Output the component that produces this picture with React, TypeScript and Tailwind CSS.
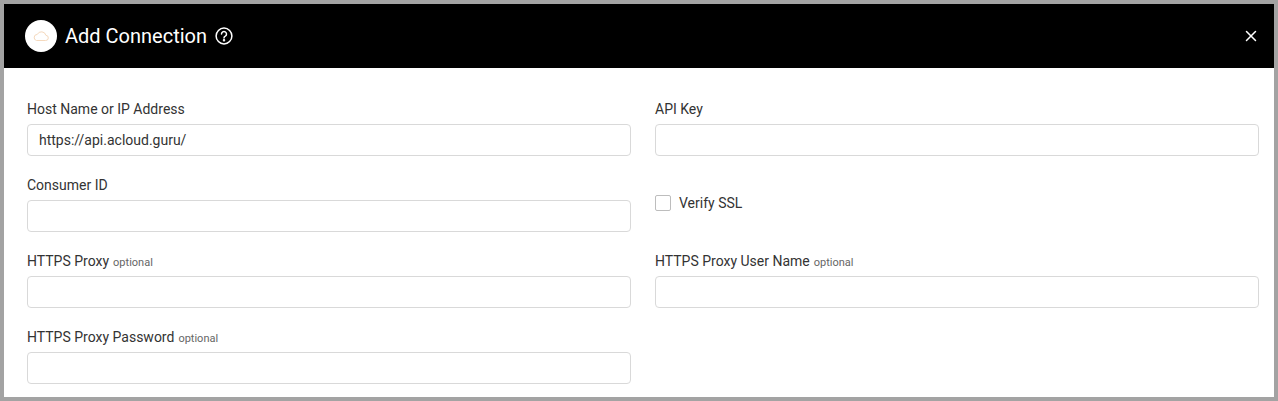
import { X } from 'lucide-react'

function Field({ label, optional, value }: { label: string; optional?: boolean; value?: string }) {
  return (
    <div>
      <div className="mb-[5px] h-5 text-sm leading-5 text-[#333]">
        {label}
        {optional && <span className="ml-1 text-[11px] text-[#666]">optional</span>}
      </div>
      <input
        readOnly
        value={value ?? ''}
        className="block h-8 w-full rounded border border-[#d9d9d9] bg-white px-[11px] text-sm text-[#333] outline-none"
      />
    </div>
  )
}

export default function App() {
  return (
    <div className="h-[401px] w-[1278px] bg-[#a3a3a3] pt-1 pr-1 pb-1 pl-1 font-['Roboto',sans-serif]">
      <div className="h-[393px] bg-white">
        <div className="flex h-16 items-center justify-between bg-black pr-[14px] pl-[21px] text-white">
          <div className="flex items-center">
            <div className="grid h-8 w-8 place-items-center rounded-full bg-white">
              <svg width="18" height="12" viewBox="0 0 18 12" fill="none" stroke="#f5d9bd" strokeWidth="1">
                <path d="M4.5 10.5h9a2.6 2.6 0 0 0 .4-5.2A4.6 4.6 0 0 0 5.3 4.4 3.1 3.1 0 0 0 4.5 10.5z" />
              </svg>
            </div>
            <h1 className="ml-2 text-xl leading-none font-normal">Add Connection</h1>
            <svg className="ml-2" width="18" height="18" viewBox="0 0 18 18" fill="none" stroke="white" strokeWidth="1.5">
              <circle cx="9" cy="9" r="7.9" />
              <path d="M6.5 7.1a2.5 2.5 0 1 1 3.8 2.1c-.9.5-1.3 1-1.3 1.9" strokeLinecap="round" />
              <circle cx="9" cy="13.3" r=".5" fill="white" />
            </svg>
          </div>
          <X size={18} strokeWidth={2} />
        </div>
        <div className="grid grid-cols-[604px_604px] gap-x-6 gap-y-[19px] pt-[31px] pl-[23px]">
          <Field label="Host Name or IP Address" value="https://api.acloud.guru/" />
          <Field label="API Key" />
          <Field label="Consumer ID" />
          <label className="flex items-center gap-2 pb-[1px] text-sm text-[#333]">
            <span className="h-4 w-4 rounded-[2px] border border-[#bdbdbd] bg-white" />
            Verify SSL
          </label>
          <Field label="HTTPS Proxy" optional />
          <Field label="HTTPS Proxy User Name" optional />
          <Field label="HTTPS Proxy Password" optional />
        </div>
      </div>
    </div>
  )
}
